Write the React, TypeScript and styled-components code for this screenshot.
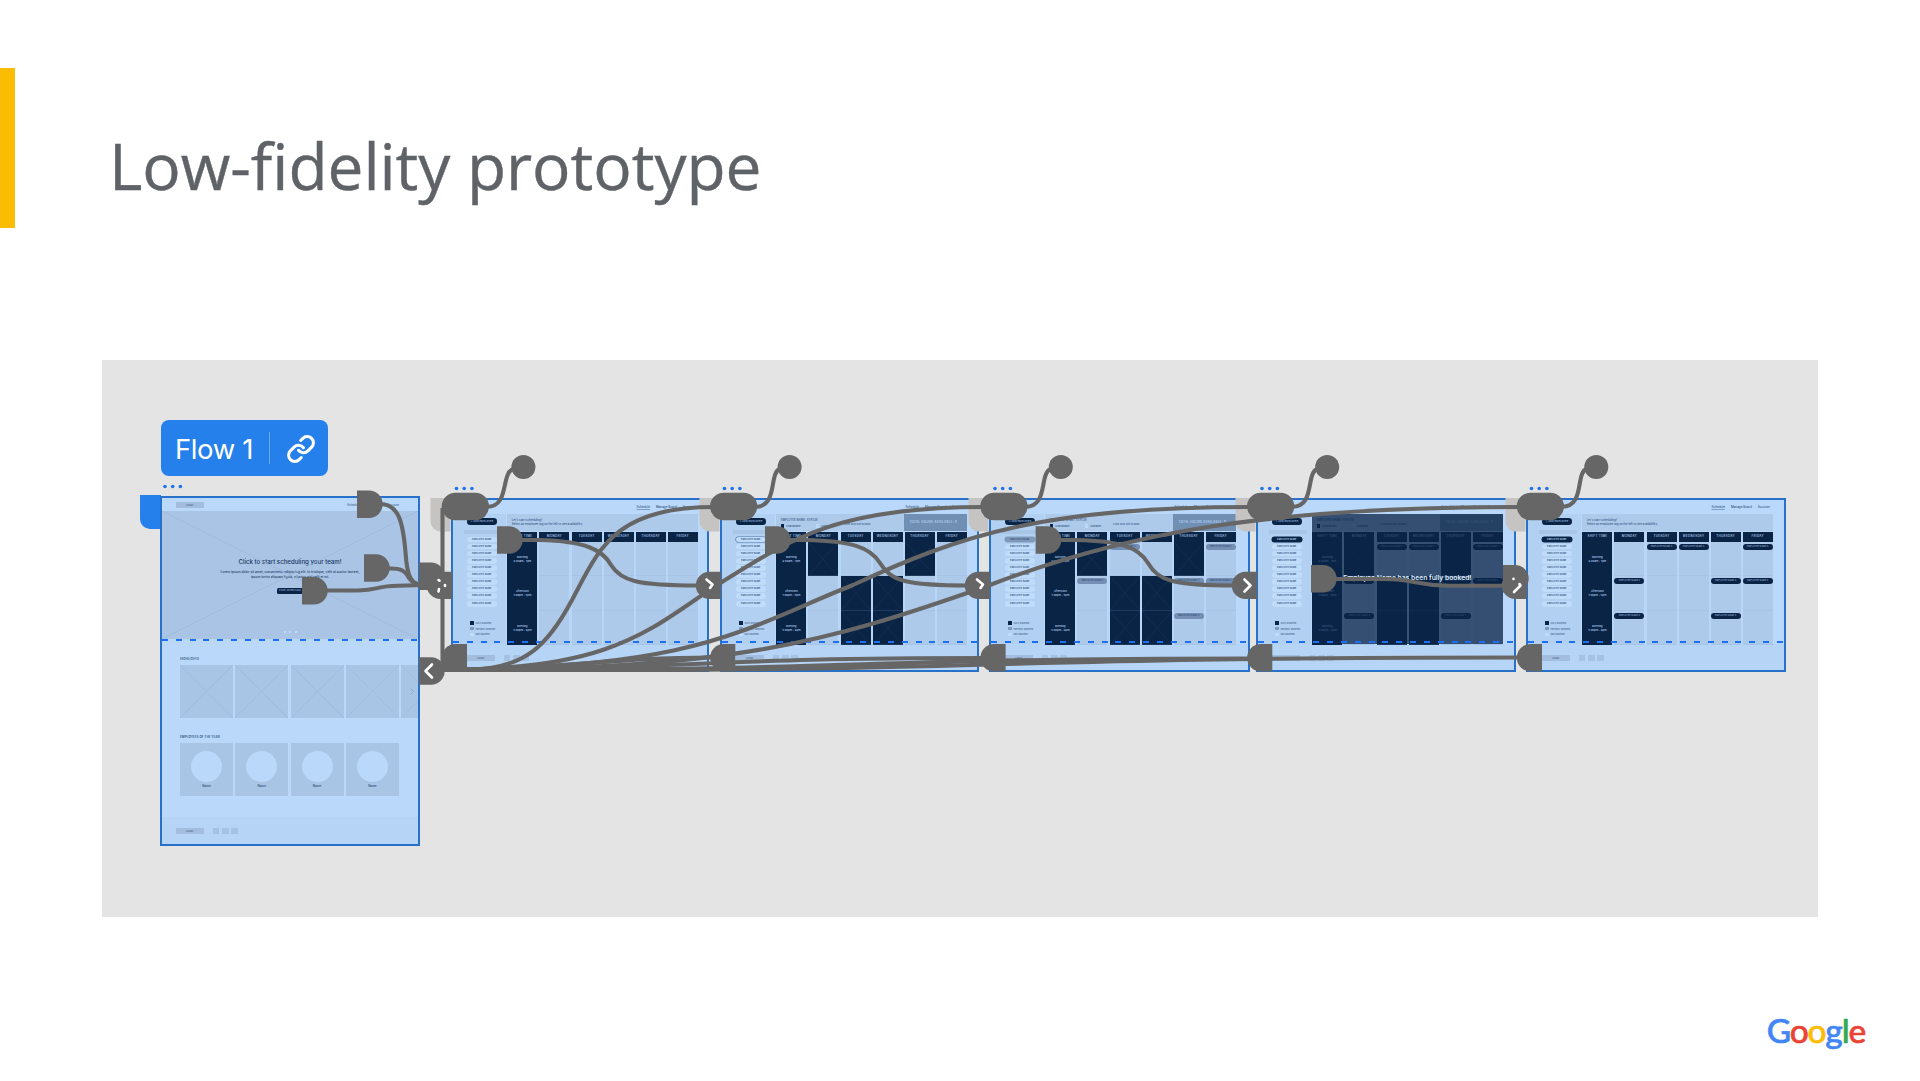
import * as React from "react";
import styled, { createGlobalStyle } from "styled-components";
import { Link } from "lucide-react";

const NAVY = "#0a2446";
const NOODLE = "#666666";
const STAGE_X = 102;
const STAGE_Y = 360;

const GlobalStyle = createGlobalStyle`
  body {
    margin: 0;
    background: #ffffff;
  }
  * {
    box-sizing: border-box;
  }
`;

const Slide = styled.main`
  width: 1920px;
  height: 1081px;
  display: flex;
  flex-direction: column;
  overflow: hidden;
  background: #ffffff;
`;

const Header = styled.header`
  display: flex;
  height: 160px;
  margin-top: 68px;
`;

const Accent = styled.div`
  width: 15px;
  background: #fbbc04;
`;

const Title = styled.h1`
  margin: 54px 0 0 94px;
  font: 400 64px/88px "Open Sans", sans-serif;
  letter-spacing: -0.06px;
  color: #5f6368;
  -webkit-text-stroke: 0.4px #5f6368;
`;

const Stage = styled.section`
  position: relative;
  width: 1716px;
  height: 557px;
  margin: 132px 0 0 102px;
  background: #e4e4e4;
  font-family: Inter, sans-serif;
`;

const Footer = styled.footer`
  display: flex;
  justify-content: flex-end;
  padding: 91px 55px 0 0;
`;

const Logo = styled.div`
  font: 500 33.5px/44px Lato, sans-serif;
  letter-spacing: -1.2px;
`;

const Letter = styled.span<{ c: string }>`
  color: ${(p) => p.c};
  -webkit-text-stroke: 0.6px ${(p) => p.c};
`;

const FlowBadge = styled.div`
  position: absolute;
  left: 59px;
  top: 60px;
  width: 167px;
  height: 56px;
  display: flex;
  align-items: center;
  padding-left: 14px;
  border-radius: 8px;
  background: #2680eb;
  color: #ffffff;
  font-size: 27.5px;
`;

const FlowLabel = styled.span`
  width: 94px;
  padding-top: 1px;
  letter-spacing: -0.4px;
  white-space: nowrap;
`;

const FlowLink = styled.div`
  display: flex;
  align-items: center;
  height: 32px;
  padding: 2px 0 0 16px;
  border-left: 1px solid #6baaf5;
`;

const StartTab = styled.div`
  position: absolute;
  left: 38px;
  top: 135px;
  width: 21px;
  height: 34px;
  border-radius: 0 0 0 10px;
  background: #2680eb;
`;

const Frame = styled.article<{ x: number; y: number; w: number; h: number }>`
  position: absolute;
  left: ${(p) => p.x - STAGE_X}px;
  top: ${(p) => p.y - STAGE_Y}px;
  width: ${(p) => p.w}px;
  height: ${(p) => p.h}px;
  display: flex;
  flex-direction: column;
  overflow: hidden;
  border: 2px solid #2871c8;
  background: #bad8f9;
  color: #35567f;
  font-size: 3px;
  line-height: 4px;
  white-space: nowrap;
`;

const Fold = styled.div<{ y: number }>`
  position: absolute;
  left: 0;
  right: 0;
  top: ${(p) => p.y}px;
  height: 2px;
  background: repeating-linear-gradient(
    90deg,
    #1d6ff5 0 6px,
    transparent 6px 13.83px
  );
`;

const LogoBox = styled.div`
  width: 28px;
  height: 6.5px;
  display: flex;
  align-items: center;
  justify-content: center;
  background: #a2bddd;
  font-size: 2.6px;
`;

const Social = styled.div`
  width: 6.6px;
  height: 6.6px;
  background: #a6c2e3;
`;

const FrameFooter = styled.div`
  display: flex;
  flex: 1;
  gap: 2.7px;
  padding: 10.5px 0 0 13.7px;
  background: #b6d4f5;

  ${LogoBox} {
    margin-right: 6.3px;
  }
`;

const HomeNav = styled.div`
  display: flex;
  justify-content: space-between;
  align-items: flex-start;
  height: 13px;
  padding: 3.5px 19px 0 13.7px;
`;

const HomeLinks = styled.div`
  display: flex;
  gap: 27px;
  padding-top: 1px;
`;

const Hero = styled.div`
  position: relative;
  height: 128px;
  display: flex;
  flex-direction: column;
  align-items: center;
  padding-top: 46px;
  background: #a9c4e5;
  color: #17375e;
`;

const Cross = styled.svg`
  position: absolute;
  inset: 0;
  width: 100%;
  height: 100%;
  stroke: #9cb8da;
  stroke-width: 0.7;
`;

const HeroTitle = styled.div`
  font-size: 6.1px;
  font-weight: 500;
  line-height: 10px;
`;

const HeroText = styled.div`
  padding-top: 3px;
  font-size: 3.25px;
  font-weight: 500;
  line-height: 5px;
  text-align: center;
`;

const HeroButton = styled.div`
  width: 26px;
  height: 6px;
  margin-top: 8px;
  border-radius: 1.5px;
  background: ${NAVY};
  color: #a9c4e5;
  font-size: 2.2px;
  line-height: 6px;
  text-align: center;
`;

const HeroDots = styled.div`
  display: flex;
  gap: 3.5px;
  margin-top: 37px;

  i {
    width: 2px;
    height: 2px;
    border-radius: 50%;
    background: #cfe3fb;
  }
`;

const SectionLabel = styled.div<{ top: number }>`
  margin: ${(p) => p.top}px 0 4px 18px;
  font-size: 3.1px;
  font-weight: 600;
`;

const Tiles = styled.div`
  display: flex;
  gap: 2.3px;
  height: 53px;
  padding-left: 18px;
`;

const Tile = styled.div`
  position: relative;
  flex: 0 0 53px;
  display: flex;
  flex-direction: column;
  align-items: center;
  padding-top: 8px;
  background: #a8c5e6;
  font-weight: 600;
`;

const Avatar = styled.div`
  width: 31px;
  height: 31px;
  margin-bottom: 2px;
  border-radius: 50%;
  background: #bad8f9;
`;

const Spacer = styled.div`
  height: 21px;
`;

const Links = styled.div`
  display: flex;
  gap: 6px;
  height: 13.5px;
  padding: 5px 0 0 183.5px;
  font-weight: 500;

  u {
    text-decoration-color: #7c9cc4;
    text-decoration-thickness: 0.5px;
  }
`;

const Board = styled.div`
  display: flex;
  gap: 1px;
  height: 130.5px;
`;

const Sidebar = styled.div`
  width: 52.7px;
  padding: 4.5px 0 0 14px;
  background: #b2d0f2;
`;

const AddButton = styled.div`
  width: 30px;
  height: 6.6px;
  border-radius: 3.3px;
  background: ${NAVY};
  color: #b2d0f2;
  font-size: 2.6px;
  line-height: 6.6px;
  text-align: center;
`;

const Search = styled.div`
  width: 38px;
  height: 3.4px;
  margin: 5.6px 0 3.1px -3px;
  background: #a8c5e6;
`;

const Person = styled.div<{ tone: string }>`
  width: 29.5px;
  height: 5.8px;
  margin-bottom: 1.2px;
  border-radius: 2.9px;
  background: ${(p) =>
    p.tone === "dark" ? NAVY : p.tone === "grey" ? "#8099b9" : "#c0dcfb"};
  box-shadow: ${(p) =>
    p.tone === "outline"
      ? "0 0 0 0.6px #4f75a5"
      : p.tone === "dark"
      ? `0 0 0 0.5px ${NAVY}`
      : p.tone === "grey"
      ? "0 0 0 0.5px #8099b9"
      : "none"};
  color: ${(p) => (p.tone === "dark" ? "#b2d0f2" : "#35567f")};
  font-size: 2.25px;
  font-weight: 600;
  line-height: 5.8px;
  text-align: center;

  &:nth-of-type(5),
  &:nth-of-type(11) {
    margin-bottom: 1.8px;
  }
`;

const Key = styled.div<{ c: string }>`
  display: flex;
  align-items: center;
  gap: 1.6px;
  height: 5.9px;
  padding-left: 3px;
  font-size: 2.6px;

  &::before {
    content: "";
    width: 3.8px;
    height: 3.8px;
    background: ${(p) => p.c};
  }
`;

const Keys = styled.div`
  padding-top: 12px;
`;

const Main = styled.div`
  position: relative;
  width: 191.3px;
  background: #b8d6f8;
`;

const Info = styled.div`
  display: flex;
  justify-content: space-between;
  height: 17px;
  padding-left: 5px;
  background: #adcaeb;
`;

const InfoText = styled.div`
  padding-top: 4px;
  font-size: 2.85px;
  font-weight: 500;
`;

const StatusRow = styled.div`
  display: flex;
  gap: 12px;
  padding-top: 1.6px;
  margin-left: -3px;
  font-size: 2.5px;
`;

const Hours = styled.div`
  width: 62.6px;
  padding-left: 5px;
  background: #718eb3;
  color: #bad8f9;
  font-size: 3.1px;
  font-weight: 500;
  line-height: 16px;
  letter-spacing: 0.2px;
`;

const Week = styled.div`
  display: grid;
  grid-template-columns: repeat(6, 30px);
  grid-template-rows: 10px repeat(3, 34.3px);
  column-gap: 2.07px;
  padding: 1.5px 0 0 0.7px;
`;

const Day = styled.div`
  margin-bottom: 0.5px;
  background: ${NAVY};
  color: #bcd7f7;
  font-size: 3px;
  font-weight: 500;
  line-height: 9px;
  letter-spacing: 0.3px;
  text-align: center;
`;

const Shift = styled.div`
  display: flex;
  flex-direction: column;
  justify-content: center;
  background: ${NAVY};
  color: #bcd7f7;
  font-size: 2.7px;
  font-weight: 500;
  line-height: 4.2px;
  text-align: center;
`;

const Slot = styled.div<{ busy: boolean }>`
  position: relative;
  padding-top: 2px;
  background: ${(p) => (p.busy ? NAVY : "#adcaeb")};
  box-shadow: inset 0 -1px ${(p) => (p.busy ? "#1f3a5e" : "#a6c4e7")};

  ${Cross} {
    stroke: #1e3759;
    stroke-width: 0.5;
  }
`;

const Tag = styled.div<{ dark: boolean }>`
  height: 6.2px;
  border-radius: 3.1px;
  background: ${(p) => (p.dark ? NAVY : "#748fb3")};
  color: ${(p) => (p.dark ? "#90aed2" : "#2d4c74")};
  font-size: 2.25px;
  font-weight: 500;
  line-height: 6.2px;
  text-align: center;
`;

const Overlay = styled.div`
  position: absolute;
  inset: 0;
  display: flex;
  align-items: center;
  justify-content: center;
  background: rgba(10, 36, 70, 0.74);
  color: #dfecfb;
  font-size: 6.75px;
  font-weight: 600;
  padding-bottom: 2px;
`;

const Noodles = styled.svg`
  position: absolute;
  inset: 0;
  width: 1716px;
  height: 557px;
`;

const LOREM = [
  "Lorem ipsum dolor sit amet, consectetur adipiscing elit. In tristique, velit ut auctor laoreet,",
  "ipsum tortor aliquam ligula, a luctus nisl velit et mi.",
];

const DAYS = ["SHIFT TIME", "MONDAY", "TUESDAY", "WEDNESDAY", "THURSDAY", "FRIDAY"];

const SHIFTS = [
  ["Morning", "9:00am - 1pm"],
  ["Afternoon", "1:00pm - 5pm"],
  ["Evening", "5:00pm - 9pm"],
];

// row-day, days counted from Monday = 1
const BUSY = ["0-1", "0-4", "1-2", "1-3", "2-2", "2-3"];
const TAGS = ["0-2", "0-5", "1-1", "1-4", "1-5", "2-4"];
const FINAL_TAGS = ["0-2", "0-3", "0-5", "1-1", "1-4", "1-5", "2-1", "2-4"];

type Screen = {
  x: number;
  w: number;
  tone: string;
  busy: string[];
  tags: string[];
  darkTags?: boolean;
  status?: boolean;
  overlay?: boolean;
};

const SCREENS: Screen[] = [
  { x: 451, w: 258, tone: "plain", busy: [], tags: [] },
  { x: 720, w: 259, tone: "outline", busy: BUSY, tags: [], status: true },
  { x: 989, w: 261, tone: "grey", busy: BUSY, tags: TAGS, status: true },
  {
    x: 1256,
    w: 260,
    tone: "dark",
    busy: BUSY,
    tags: FINAL_TAGS,
    darkTags: true,
    status: true,
    overlay: true,
  },
  { x: 1526, w: 260, tone: "dark", busy: [], tags: FINAL_TAGS, darkTags: true },
];

const CrossLines = () => (
  <Cross viewBox="0 0 100 100" preserveAspectRatio="none">
    <path d="M0 0L100 100M100 0L0 100" vectorEffect="non-scaling-stroke" />
  </Cross>
);

const FooterBar = () => (
  <FrameFooter>
    <LogoBox>LOGO</LogoBox>
    <Social />
    <Social />
    <Social />
  </FrameFooter>
);

const HomeFrame = () => (
  <Frame x={160} y={496} w={260} h={350}>
    <HomeNav>
      <LogoBox>LOGO</LogoBox>
      <HomeLinks>
        <span>Schedule</span>
        <span>Account</span>
      </HomeLinks>
    </HomeNav>
    <Hero>
      <CrossLines />
      <HeroTitle>Click to start scheduling your team!</HeroTitle>
      <HeroText>
        {LOREM[0]}
        <br />
        {LOREM[1]}
      </HeroText>
      <HeroButton>START SCHEDULING</HeroButton>
      <HeroDots>
        <i />
        <i />
        <i />
      </HeroDots>
    </Hero>
    <SectionLabel top={18}>HIGHLIGHTS</SectionLabel>
    <Tiles>
      {[0, 1, 2, 3, 4].map((i) => (
        <Tile key={i}>
          <CrossLines />
        </Tile>
      ))}
    </Tiles>
    <SectionLabel top={17}>EMPLOYEES OF THE YEAR</SectionLabel>
    <Tiles>
      {[0, 1, 2, 3].map((i) => (
        <Tile key={i}>
          <Avatar />
          Name
        </Tile>
      ))}
    </Tiles>
    <Spacer />
    <FooterBar />
    <Fold y={141} />
  </Frame>
);

const ScheduleFrame = ({ screen }: { screen: Screen }) => (
  <Frame x={screen.x} y={498} w={screen.w} h={174}>
    <Links>
      <u>Schedule</u>
      <span>Manage Board</span>
      <span>Account</span>
    </Links>
    <Board>
      <Sidebar>
        <AddButton>+ ADD EMPLOYEE</AddButton>
        <Search />
        {Array.from({ length: 10 }, (_, i) => (
          <Person key={i} tone={i === 0 ? screen.tone : "plain"}>
            EMPLOYEE NAME
          </Person>
        ))}
        <Keys>
          <Key c={NAVY}>Fully booked</Key>
          <Key c="#7f9abc">Partially booked</Key>
          <Key c="#c0dcfb">Not booked</Key>
        </Keys>
      </Sidebar>
      <Main>
        <Info>
          {screen.status ? (
            <>
              <InfoText>
                EMPLOYEE NAME: STATUS
                <StatusRow>
                  <Key c={NAVY}>Unavailable</Key>
                  <Key c="#bad8f9">Available</Key>
                  <span>Click on a slot to book</span>
                </StatusRow>
              </InfoText>
              <Hours>TOTAL HOURS AVAILABLE: X</Hours>
            </>
          ) : (
            <InfoText>
              Let's start scheduling!
              <br />
              Select an employee tag on the left to see availability.
            </InfoText>
          )}
        </Info>
        <Week>
          {DAYS.map((day) => (
            <Day key={day}>{day}</Day>
          ))}
          {SHIFTS.map(([name, hours], row) => (
            <React.Fragment key={name}>
              <Shift>
                <span>{name}</span>
                <span>{hours}</span>
              </Shift>
              {[1, 2, 3, 4, 5].map((day) => {
                const id = `${row}-${day}`;
                const busy = screen.busy.includes(id);
                return (
                  <Slot key={id} busy={busy}>
                    {busy && <CrossLines />}
                    {!busy && screen.tags.includes(id) && (
                      <Tag dark={!!screen.darkTags}>EMPLOYEE NAME X</Tag>
                    )}
                  </Slot>
                );
              })}
            </React.Fragment>
          ))}
        </Week>
        {screen.overlay && (
          <Overlay>Employee Name has been fully booked!</Overlay>
        )}
      </Main>
    </Board>
    <FooterBar />
    <Fold y={141} />
  </Frame>
);

// start handle, flat on the left
const out = (x: number, y: number) =>
  `M${x} ${y}h12a13.7 13.7 0 0 1 0 27.4h-12z`;

// end handle, flat on the right
const into = (x: number, y: number) =>
  `M${x} ${y}h-11.5a13.7 13.7 0 0 0 0 27.4h11.5z`;

const PILLS = [
  [441.7, 523.4],
  [710, 789.6],
  [980.3, 1060.8],
  [1247, 1327.2],
  [1516.7, 1596.3],
];

const CURVES = [
  "M380 504C399 504 403 523 405.500 552C407 577 411 585 424 585",
  "M388 568.500C400 568 405 570 409 578C412 583 416 585 424 585",
  "M326 590.500H358C380 590 375 586 398 585.800L424 585",
  "M442.500 508V668",
  "M520 540H540C585 541 603 550 611 565C621 581 637 585.500 698 585.500",
  "M788 540H806C851 541 870 547 880 563C891 581 906 585.500 968 585.500",
  "M1059 540H1076C1121 541 1138 547 1148 563C1158 581 1174 585.500 1235 585.500",
  "M1334 579H1385C1415 579 1416 585.800 1450 585.800H1506",
  "M442 669.500H470C525 669 548 645 572 600C598 552 612 507 714 507",
  "M442 669.500C620 671 655 624 722 582C792 538 840 507 984 507",
  "M442 670C700 668 740 630 853 585C960 535 1045 507 1250 507",
  "M442 670C730 669 820 645 990 585C1120 535 1260 507 1520 507",
  "M442 670C590 668 600 657.500 714 657.500",
  "M442 670C720 668 700 658 984 658",
  "M442 670C860 671 850 658.500 1252 658.500",
  "M442 670H560C990 671 990 657.500 1520 657.500",
];

const Connections = () => (
  <Noodles viewBox={`${STAGE_X} ${STAGE_Y} 1716 557`}>
    {SCREENS.map(({ x }) => (
      <path
        key={x}
        d={`M${x - 20.5} 498h20v33.500h-10a10 10 0 0 1 -10 -10z`}
        fill="#c6c4c2"
      />
    ))}
    <g fill="none" stroke={NOODLE} strokeWidth="4.1">
      {CURVES.map((d) => (
        <path key={d} d={d} />
      ))}
      {PILLS.map(([x, cx]) => (
        <path
          key={x}
          d={`M${x + 45} 506.800C${x + 69} 507 ${x + 58} 472 ${cx - 9} 468.500`}
        />
      ))}
    </g>
    <g fill={NOODLE}>
      {PILLS.map(([x, cx]) => (
        <g key={x}>
          <rect x={x} y="492.700" width="47.300" height="27.500" rx="13.700" />
          <circle cx={cx} cy="467" r="12" />
          <path d={into(x + 25.3, 644)} />
        </g>
      ))}
      {SCREENS.map(({ x }) => (
        <path key={x} d={into(x + 1, 571.7)} />
      ))}
      <path d={out(357, 490.5)} />
      <path d={out(364, 554.3)} />
      <path d={out(302, 577)} />
      <path d={out(419, 562.5)} />
      <path d={out(419, 657.3)} />
      <path d={out(497, 526.3)} />
      <path d={out(765, 526.3)} />
      <path d={out(1035.6, 526.3)} />
      <path d={out(1311, 565)} />
      <path d={out(1503, 565)} />
      <path d="M441 655H467V672H441z" />
    </g>
    <g
      fill="none"
      stroke="#ffffff"
      strokeWidth="2.600"
      strokeLinecap="round"
      strokeLinejoin="round"
    >
      <path d="M432 664.500L425.500 671L432 677.500" />
      <path d="M706.500 579.500L712.500 584.500L710 588" />
      <path d="M977 579.500L983 584.500L980.500 588" />
      <path d="M1244.500 579.500L1250.500 585.500L1244.500 591.500" />
      <path d="M1513.500 578.800v.1M1519.500 584L1520.500 585.500L1514 592" />
      <path d="M438.500 580l1 .7M438.500 591.500l.5-2.500M445 585v.9" />
    </g>
    <g fill="#1f73ea">
      {[165, 458, 726, 996.5, 1263.5, 1533].map((x, i) => (
        <g key={x}>
          {[0, 7.7, 15.4].map((dx) => (
            <circle
              key={dx}
              cx={x + dx - (i ? 1.5 : 0)}
              cy={i ? 488.5 : 486.5}
              r="1.800"
            />
          ))}
        </g>
      ))}
    </g>
    <path
      d="M410.500 688.500L413.500 691.500L410.500 694.500"
      fill="none"
      stroke="#8ba5c6"
      strokeWidth=".8"
    />
  </Noodles>
);

const GOOGLE = [
  ["G", "#4285f4"],
  ["o", "#ea4335"],
  ["o", "#fbbc05"],
  ["g", "#4285f4"],
  ["l", "#34a853"],
  ["e", "#ea4335"],
];

export default function App() {
  return (
    <Slide>
      <GlobalStyle />
      <Header>
        <Accent />
        <Title>Low-fidelity prototype</Title>
      </Header>
      <Stage>
        <FlowBadge>
          <FlowLabel>Flow 1</FlowLabel>
          <FlowLink>
            <Link size={30} strokeWidth={2.4} />
          </FlowLink>
        </FlowBadge>
        <StartTab />
        <HomeFrame />
        {SCREENS.map((screen) => (
          <ScheduleFrame key={screen.x} screen={screen} />
        ))}
        <Connections />
      </Stage>
      <Footer>
        <Logo>
          {GOOGLE.map(([letter, c], i) => (
            <Letter key={i} c={c}>
              {letter}
            </Letter>
          ))}
        </Logo>
      </Footer>
    </Slide>
  );
}
